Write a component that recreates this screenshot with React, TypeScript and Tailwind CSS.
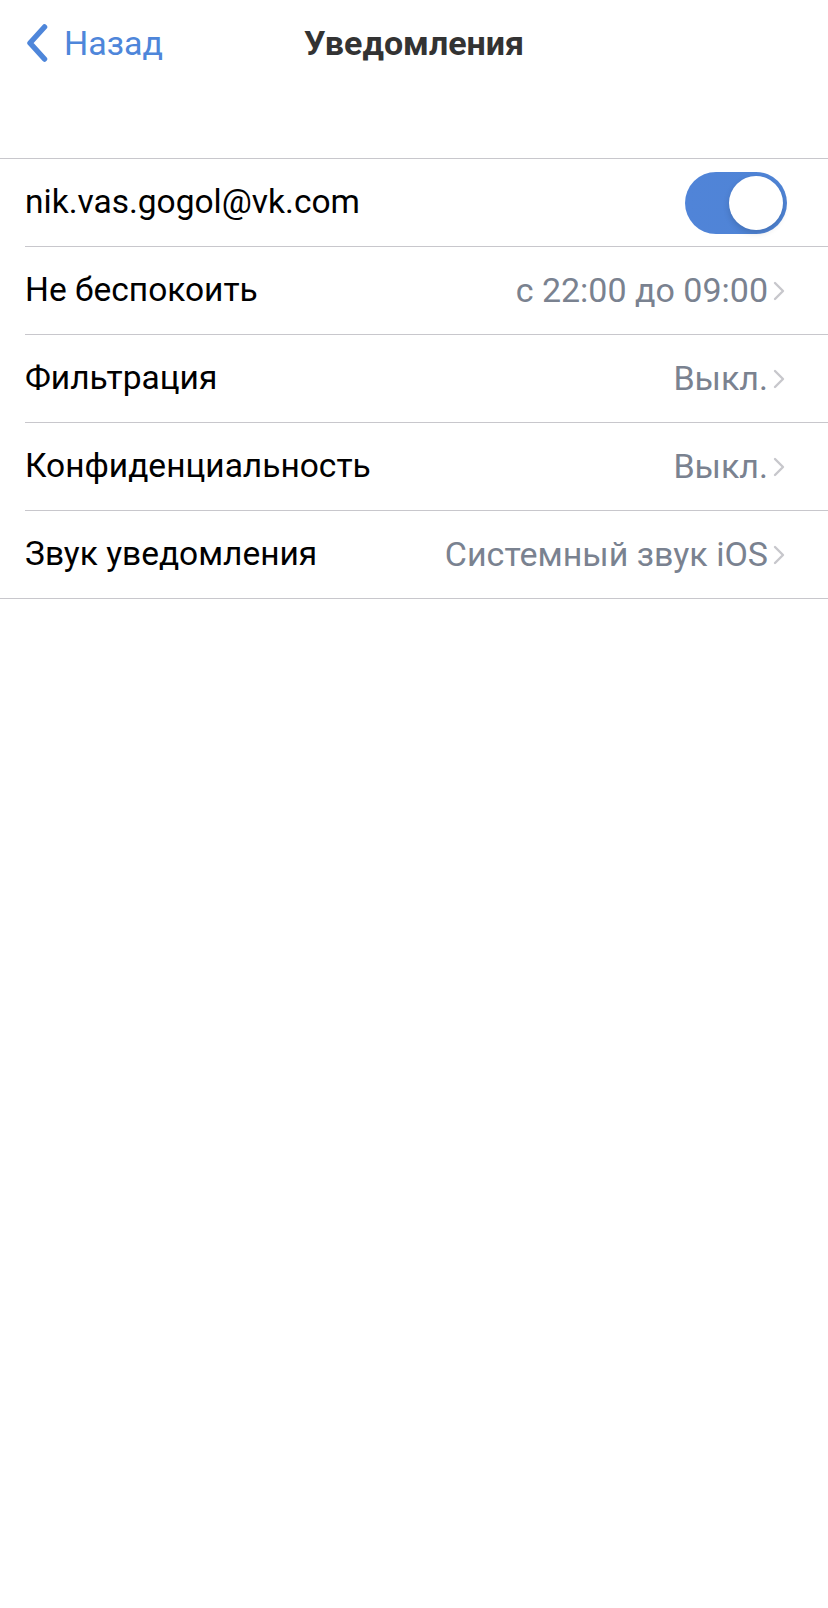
import { useState } from "react";

type Row = { title: string; value: string };

const rows: Row[] = [
  { title: "Не беспокоить", value: "с 22:00 до 09:00" },
  { title: "Фильтрация", value: "Выкл." },
  { title: "Конфиденциальность", value: "Выкл." },
  { title: "Звук уведомления", value: "Системный звук iOS" },
];

function Chevron() {
  return (
    <svg width="14" height="20" viewBox="0 0 14 20" className="ml-[4px] shrink-0" fill="none">
      <path d="M3 2l8 8-8 8" stroke="#c7c7cc" strokeWidth="2.4" strokeLinecap="round" strokeLinejoin="round" />
    </svg>
  );
}

function Toggle({ on, onChange }: { on: boolean; onChange: () => void }) {
  return (
    <button
      onClick={onChange}
      className={`relative w-[102px] h-[62px] rounded-full transition-colors ${on ? "bg-gradient-to-r from-[#5084d8] to-[#4f84d5]" : "bg-[#e9e9eb]"}`}
    >
      <span
        className={`absolute top-[4px] w-[54px] h-[54px] rounded-full bg-white shadow-[0_3px_6px_rgba(0,0,0,0.15)] transition-all ${on ? "left-[44px]" : "left-[4px]"}`}
      />
    </button>
  );
}

export default function App() {
  const [enabled, setEnabled] = useState(true);

  return (
    <div className="min-h-screen bg-white font-['Roboto','Inter',sans-serif]">
      {/* nav bar */}
      <div className="relative h-[86px] flex items-center">
        <button className="flex items-center pl-[26px] text-[#4e86da]">
          <svg width="22" height="38" viewBox="0 0 22 38" fill="none">
            <path d="M18.5 3L4 19l14.5 16" stroke="currentColor" strokeWidth="5.5" strokeLinecap="round" strokeLinejoin="round" />
          </svg>
          <span className="ml-[16px] text-[34px] leading-none">Назад</span>
        </button>
        <h1 className="absolute left-1/2 -translate-x-1/2 text-[34px] font-bold text-[#333333] leading-none">Уведомления</h1>
      </div>

      <div className="h-[72px]" />

      <div className="border-t border-b border-[#c8c7cc]">
        <div className="flex items-center justify-between h-[87px] pl-[25px] pr-[41px]">
          <span className="text-[33.5px] text-black">nik.vas.gogol@vk.com</span>
          <Toggle on={enabled} onChange={() => setEnabled(!enabled)} />
        </div>
        {rows.map((row) => (
          <div key={row.title} className="pl-[25px]">
            <div className="flex items-center justify-between h-[88px] pr-[42px] border-t border-[#c8c7cc]">
              <span className="text-[33.5px] text-black">{row.title}</span>
              <div className="flex items-center">
                <span className="text-[34px] text-[#7a8290]">{row.value}</span>
                <Chevron />
              </div>
            </div>
          </div>
        ))}
      </div>
    </div>
  );
}
